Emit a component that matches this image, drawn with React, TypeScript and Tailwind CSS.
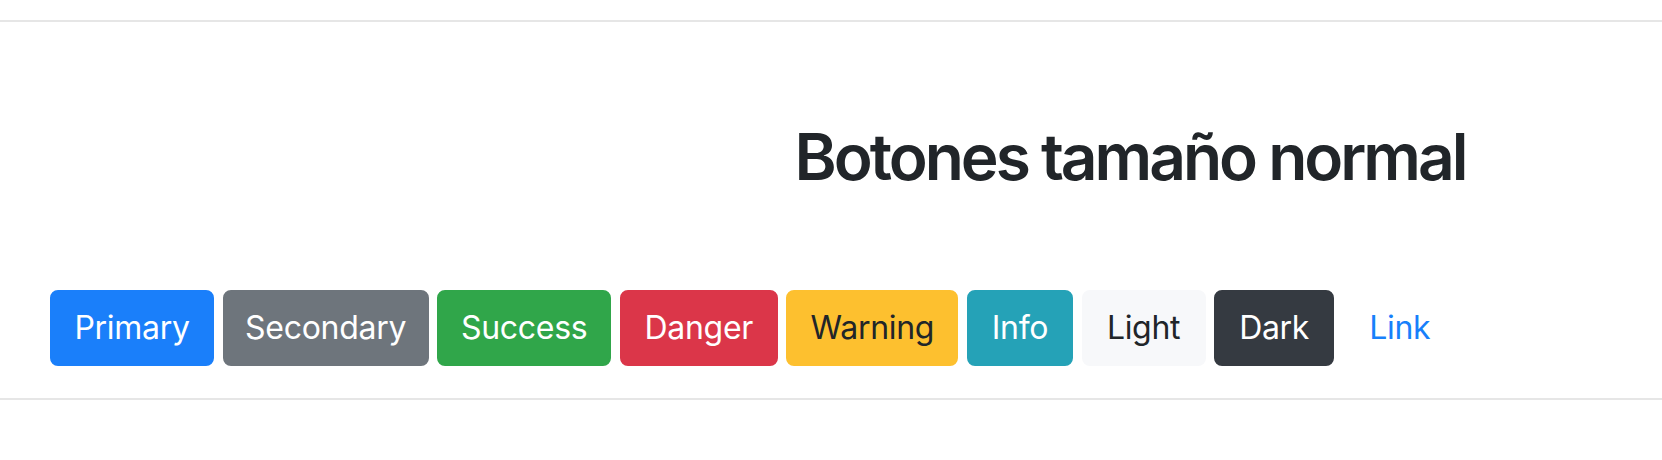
const buttons = [
  { label: 'Primary', cls: 'w-[164px] bg-[#1a7ffa] border-[#1a7ffa] text-white' },
  { label: 'Secondary', cls: 'w-[206px] bg-[#6e757c] border-[#6e757c] text-white' },
  { label: 'Success', cls: 'w-[174px] bg-[#30a64a] border-[#30a64a] text-white' },
  { label: 'Danger', cls: 'w-[158px] bg-[#db3649] border-[#db3649] text-white' },
  { label: 'Warning', cls: 'w-[172px] bg-[#fdc02f] border-[#fdc02f] text-[#212529]' },
  { label: 'Info', cls: 'w-[106px] bg-[#25a2b7] border-[#25a2b7] text-white' },
  { label: 'Light', cls: 'w-[124px] bg-[#f7f8fa] border-[#f7f8fa] text-[#212529]' },
  { label: 'Dark', cls: 'w-[120px] bg-[#353a41] border-[#353a41] text-white' },
  { label: 'Link', cls: 'w-[114px] bg-transparent border-transparent text-[#1780fb]' },
];

const App = () => {
  return (
    <div className="w-full h-[460px] bg-white pt-5 font-['Inter',sans-serif]">
      <hr className="border-0 border-t-2 border-[#e6e6e6]" />
      <div className="mt-[97px] pl-[598px]">
        <h2 className="text-center text-[64px] leading-[1.2] font-semibold tracking-[-3px] text-[#212529]">
          Botones tamaño normal
        </h2>
      </div>
      <div className="mt-[94px] flex gap-[8.6px] pl-[50px]">
        {buttons.map((b) => (
          <button
            key={b.label}
            type="button"
            className={`h-[76px] rounded-lg border-2 text-[32px] leading-[1.5] tracking-[-0.3px] text-center ${b.cls}`}
          >
            {b.label}
          </button>
        ))}
      </div>
      <hr className="mt-8 border-0 border-t-2 border-[#e6e6e6]" />
    </div>
  );
};

export default App;
